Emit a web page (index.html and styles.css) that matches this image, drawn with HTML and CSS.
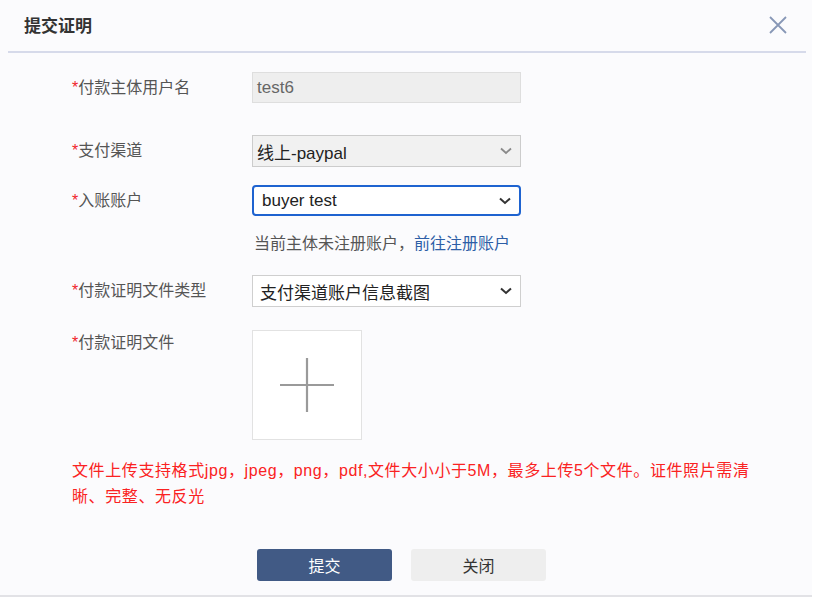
FILE: index.html
```html
<!DOCTYPE html>
<html lang="zh-CN">
<head>
<meta charset="utf-8">
<title>提交证明</title>
<link rel="stylesheet" href="styles.css">
</head>
<body>
<div class="dialog">
  <div class="header">
    <div class="title">提交证明</div>
    <svg class="close" width="20" height="20" viewBox="0 0 20 20"><path d="M2 2 L18 18 M18 2 L2 18" stroke="#8797b6" stroke-width="1.8" fill="none"/></svg>
  </div>
  <div class="form">
    <div class="row row-1">
      <div class="label"><span class="req">*</span>付款主体用户名</div>
      <div class="control input disabled">test6</div>
    </div>
    <div class="row row-2">
      <div class="label"><span class="req">*</span>支付渠道</div>
      <div class="control select disabled">
        <span class="val">线上-paypal</span>
        <svg class="chev" width="12" height="8" viewBox="0 0 12 8"><path d="M1 1.5 L6 6 L11 1.5" stroke="#8a8a8a" stroke-width="1.8" fill="none"/></svg>
      </div>
    </div>
    <div class="row row-3">
      <div class="label"><span class="req">*</span>入账账户</div>
      <div class="control select focus">
        <span class="val">buyer test</span>
        <svg class="chev" width="12" height="8" viewBox="0 0 12 8"><path d="M1 1.5 L6 6 L11 1.5" stroke="#333" stroke-width="2" fill="none"/></svg>
      </div>
    </div>
    <div class="row row-hint">
      <div class="label"></div>
      <div class="hint">当前主体未注册账户，<a class="link">前往注册账户</a></div>
    </div>
    <div class="row row-4">
      <div class="label"><span class="req">*</span>付款证明文件类型</div>
      <div class="control select">
        <span class="val">支付渠道账户信息截图</span>
        <svg class="chev" width="12" height="8" viewBox="0 0 12 8"><path d="M1 1.5 L6 6 L11 1.5" stroke="#333" stroke-width="2" fill="none"/></svg>
      </div>
    </div>
    <div class="row row-5">
      <div class="label label-top"><span class="req">*</span>付款证明文件</div>
      <div class="upload">
        <svg width="56" height="56" viewBox="0 0 56 56"><path d="M28 1 V55 M1 28 H55" stroke="#9a9a9a" stroke-width="2.2" fill="none"/></svg>
      </div>
    </div>
    <div class="note">文件上传支持格式jpg，jpeg，png，pdf,文件大小小于5M，最多上传5个文件。证件照片需清晰、完整、无反光</div>
    <div class="buttons">
      <button class="btn primary">提交</button>
      <button class="btn plain">关闭</button>
    </div>
  </div>
</div>
</body>
</html>
```
FILE: styles.css
```css
* { box-sizing: border-box; }
body {
  margin: 0;
  background: #ffffff;
  font-family: "Liberation Sans", "Noto Sans CJK SC", sans-serif;
  color: #333;
}
.dialog {
  width: 812px;
  height: 597px;
  background: #fbfbfd;
  border-bottom: 2px solid #e2e2e6;
}
.header {
  height: 53px;
  margin: 0 6px 0 8px;
  padding: 0 18px 2px 16px;
  display: flex;
  align-items: center;
  justify-content: space-between;
  border-bottom: 2px solid #d6daea;
}
.title {
  font-size: 17px;
  font-weight: bold;
  color: #333;
}
.close { display: block; }
.form {
  padding-left: 72px;
}
.row {
  display: flex;
  align-items: center;
}
.label {
  width: 180px;
  flex: none;
  font-size: 16px;
  color: #555;
  line-height: 24px;
}
.req { color: #f0262a; }
.row-1 { margin-top: 19px; }
.row-2 { margin-top: 32px; }
.row-3 { margin-top: 18px; }
.row-hint { margin-top: 16px; }
.row-4 { margin-top: 19px; }
.row-5 { margin-top: 23px; align-items: flex-start; }
.label-top { margin-top: 1px; }
.control {
  width: 269px;
  height: 32px;
  display: flex;
  align-items: center;
  justify-content: space-between;
  font-size: 17px;
  border: 1px solid #cfcfcf;
  background: #fff;
  padding: 0 8px 0 4px;
}
.input.disabled {
  height: 31px;
  background: #eeeeee;
  border-color: #dedede;
  color: #666;
}
.select.disabled {
  background: #f1f1f1;
  border-color: #cccccc;
  color: #222;
}
.select.focus {
  height: 31px;
  border: 2px solid #1e63d0;
  border-radius: 4px;
  padding-left: 8px;
  color: #222;
}
.select { color: #222; }
.row-4 .select { padding-left: 7px; }
.chev { display: block; }
.hint {
  font-size: 16px;
  color: #555;
  line-height: 24px;
  padding-left: 2px;
}
.link { color: #2d5ea6; }
.upload {
  width: 110px;
  height: 110px;
  border: 1px solid #e2e2e2;
  background: #fff;
  display: flex;
  align-items: center;
  justify-content: center;
}
.note {
  margin-top: 18px;
  width: 685px;
  font-size: 16px;
  line-height: 26px;
  letter-spacing: 0.6px;
  color: #fa2222;
}
.buttons {
  margin-top: 39px;
  padding-left: 185px;
  display: flex;
  gap: 19px;
}
.btn {
  width: 135px;
  height: 32px;
  border: none;
  border-radius: 3px;
  font-family: inherit;
  font-size: 16px;
}
.primary { background: #415a85; color: #fff; }
.plain { background: #eeeeee; color: #333; }
```
